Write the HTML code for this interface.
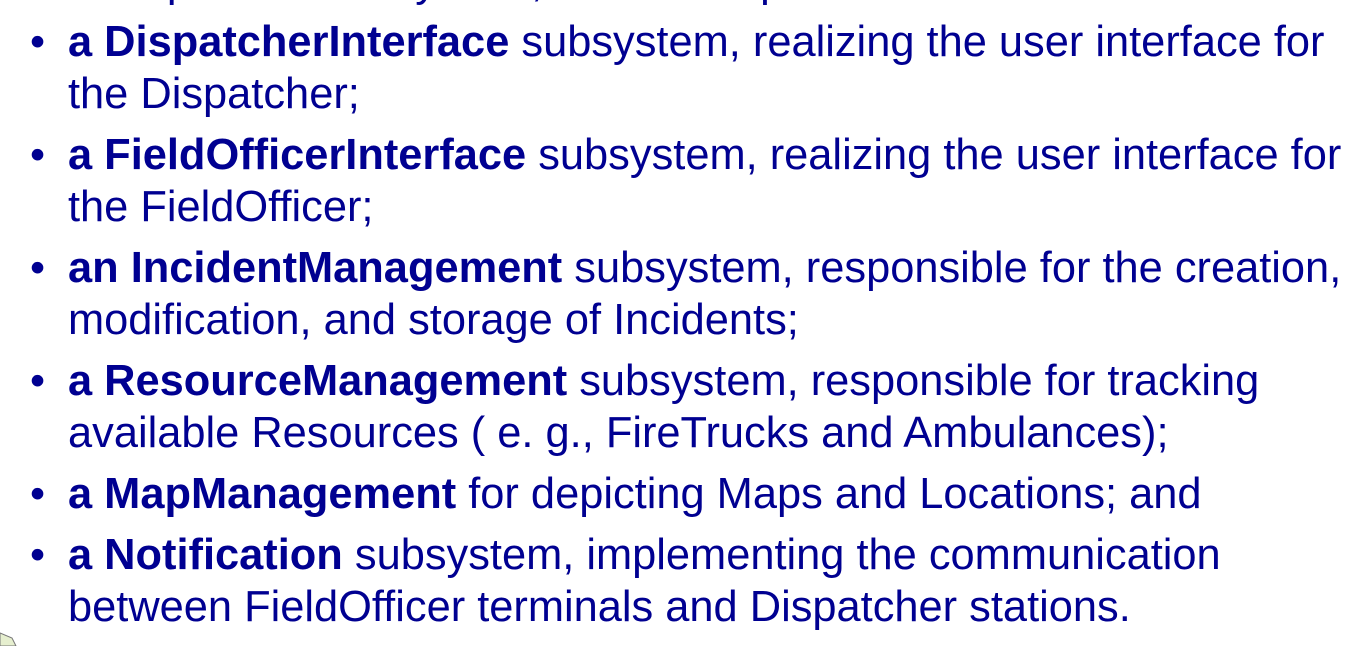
<!DOCTYPE html>
<html><head><style>
body{margin:0;width:1362px;height:646px;background:#fff;overflow:hidden;position:relative;font-family:"Liberation Sans",Arial,sans-serif;color:#000091;}
.l{position:absolute;left:68px;font-size:43.4px;line-height:52px;white-space:nowrap;}
.b{position:absolute;left:30px;font-size:43px;line-height:52px;}
b{font-weight:bold;}
</style></head><body>
<div class="l" style="top:-44px;left:68px">a Dispatcher subsystem, which composes</div>
<div class="b" style="top:16px">•</div><div class="l" style="top:16px"><b>a DispatcherInterface</b> subsystem, realizing the user interface for</div>
<div class="l" style="top:68px">the Dispatcher;</div>
<div class="b" style="top:129px">•</div><div class="l" style="top:129px"><b>a FieldOfficerInterface</b> subsystem, realizing the user interface for</div>
<div class="l" style="top:181px">the FieldOfficer;</div>
<div class="b" style="top:242px">•</div><div class="l" style="top:242px"><b>an IncidentManagement</b> subsystem, responsible for the creation,</div>
<div class="l" style="top:294px">modification, and storage of Incidents;</div>
<div class="b" style="top:355px">•</div><div class="l" style="top:355px"><b>a ResourceManagement</b> subsystem, responsible for tracking</div>
<div class="l" style="top:407px">available Resources ( e. g., FireTrucks and Ambulances);</div>
<div class="b" style="top:468px">•</div><div class="l" style="top:468px"><b>a MapManagement</b> for depicting Maps and Locations; and</div>
<div class="b" style="top:529px">•</div><div class="l" style="top:529px"><b>a Notification</b> subsystem, implementing the communication</div>
<div class="l" style="top:581px">between FieldOfficer terminals and Dispatcher stations.</div>
<svg style="position:absolute;left:0;top:630px" width="20" height="16"><path d="M0 3 L12 8 L16 16 L0 16Z" fill="#e6efcf" stroke="#777" stroke-width="1"/></svg>
</body></html>
